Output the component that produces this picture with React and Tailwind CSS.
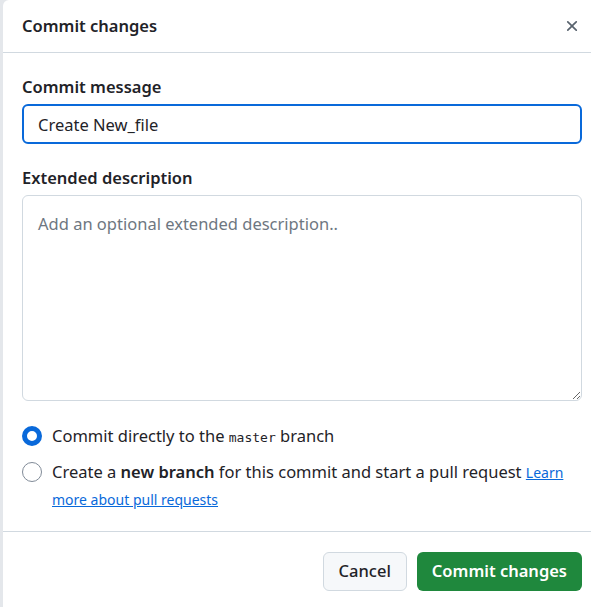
const CloseIcon = () => (
  <svg width="18" height="18" viewBox="0 0 16 16" fill="#59636e">
    <path d="M3.72 3.72a.75.75 0 0 1 1.06 0L8 6.94l3.22-3.22a.749.749 0 0 1 1.275.326.749.749 0 0 1-.215.734L9.06 8l3.22 3.22a.749.749 0 0 1-.326 1.275.749.749 0 0 1-.734-.215L8 9.06l-3.22 3.22a.751.751 0 0 1-1.042-.018.751.751 0 0 1-.018-1.042L6.94 8 3.72 4.78a.75.75 0 0 1 0-1.06Z" />
  </svg>
);

const App = () => {
  return (
    <div className="w-[591px] h-[607px] bg-[#e4e7eb] pl-[3px] font-['Noto_Sans',sans-serif] text-[#1f2328]">
      <div className="bg-white h-full rounded-tl-md flex flex-col">
        {/* header */}
        <div className="h-[53px] flex items-center justify-between pl-[19px] pr-[10px] border-b border-[#d1d9e0]">
          <h2 className="text-[16.5px] font-semibold">Commit changes</h2>
          <CloseIcon />
        </div>

        {/* body */}
        <div className="pl-[19px] pr-[9px] pt-[22px] flex-1">
          <label className="block text-[16.5px] font-semibold leading-6 mb-[5px]">Commit message</label>
          <input
            readOnly
            defaultValue="Create New_file"
            className="w-full h-[40px] px-[14px] rounded-md border-2 border-[#0969da] text-[16.5px] outline-none"
          />

          <label className="block text-[16.5px] font-semibold leading-6 mt-[22px] mb-[5px]">Extended description</label>
          <textarea
            placeholder="Add an optional extended description.."
            className="w-full h-[206px] px-[15px] py-[16px] rounded-md border border-[#d1d9e0] text-[16.5px] outline-none placeholder:text-[#6e7781] resize-y leading-6"
          />

          <div className="mt-[15px] flex flex-col gap-[9px]">
            <div className="flex items-start gap-[10px] leading-[27px] text-[16.5px]">
              <span className="mt-[4px] w-[20px] h-[20px] rounded-full border-[5px] border-[#0969da] shrink-0" />
              <span>
                Commit directly to the <code className="font-['DejaVu_Sans_Mono',monospace] text-[13px] leading-none">master</code> branch
              </span>
            </div>
            <div className="flex items-start gap-[10px] leading-[27px] text-[16.5px]">
              <span className="mt-[4px] w-[20px] h-[20px] rounded-full border border-[#818b98] shrink-0" />
              <p>
                Create a <b className="font-semibold">new branch</b> for this commit and start a pull request{" "}
                <a href="#" className="text-[14px] leading-none text-[#0969da] underline">Learn more about pull requests</a>
              </p>
            </div>
          </div>
        </div>

        {/* footer */}
        <div className="border-t border-[#d1d9e0] flex justify-end gap-[10px] pt-[20px] pb-[16px] pr-[9px]">
          <button className="h-[39px] px-[15px] rounded-md border border-[#d1d9e0] bg-[#f6f8fa] text-[16.5px] font-medium">Cancel</button>
          <button className="h-[39px] px-[15px] rounded-md bg-[#1f883d] text-white text-[16.5px] font-semibold">Commit changes</button>
        </div>
      </div>
    </div>
  );
};

export default App;
